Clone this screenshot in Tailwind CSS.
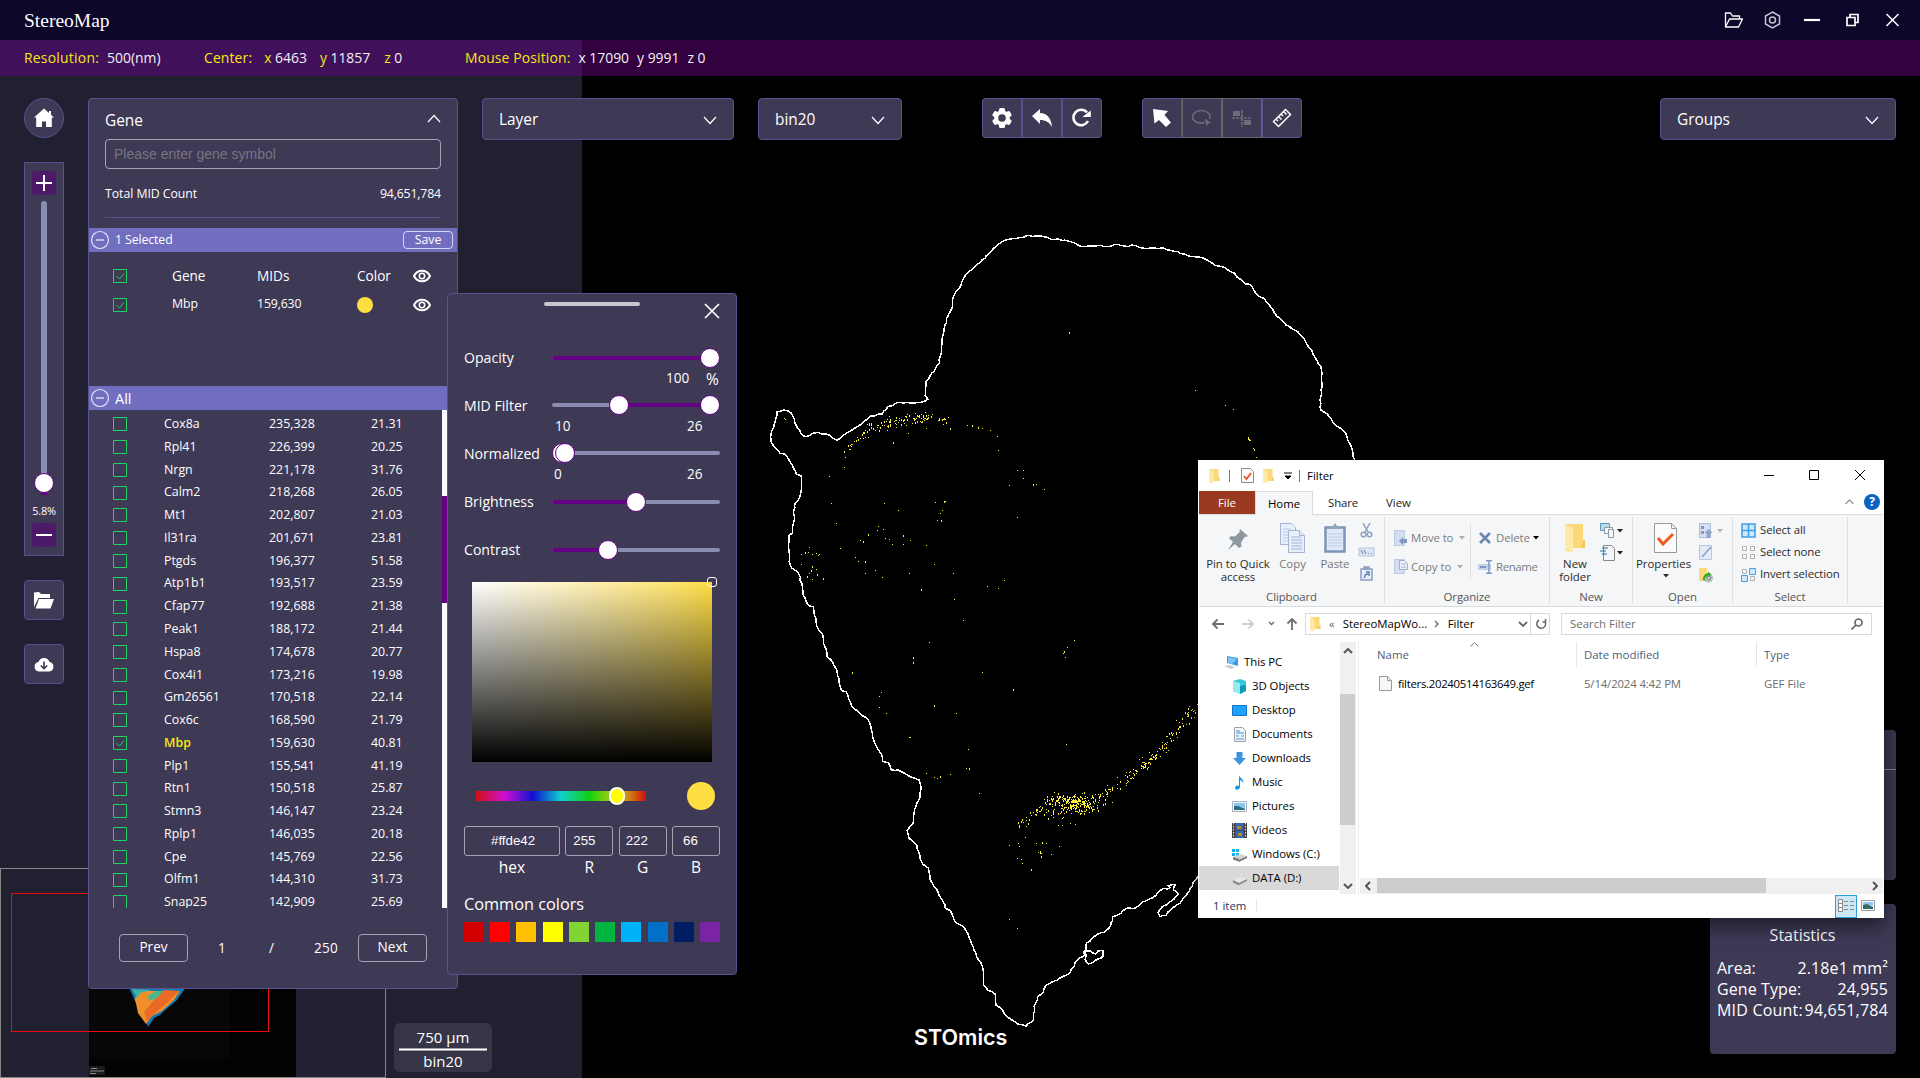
<!DOCTYPE html>
<html lang="en">
<head>
<meta charset="utf-8">
<title>StereoMap</title>
<script src="https://cdn.jsdelivr.net/npm/@tailwindcss/browser@4"></script>
</head>
<body class="relative w-[1920px] h-[1078px] overflow-hidden bg-black text-white font-['Open_Sans',sans-serif] text-[15px] whitespace-nowrap">

<svg class="hidden">
  <symbol id="folder" viewBox="0 0 10 14"><path d="M0 0h9v12H4L2 14 0 13z" fill="#fbd878"/><path d="M0 0l4 2v12L0 12.500z" fill="#ffe9a6"/><path d="M9 8h1v4H8z" fill="#f4c95c"/></symbol>
  <symbol id="caret" viewBox="0 0 6 4"><path d="M0 0h6L3 3.500z" fill="currentColor"/></symbol>
  <symbol id="eye" viewBox="0 0 18 14"><path d="M1 7C4.500 0 13.500 0 17 7 13.500 14 4.500 14 1 7z" fill="none" stroke="#fff" stroke-width="2"/><circle cx="9" cy="7" r="2.700" fill="none" stroke="#fff" stroke-width="1.500"/></symbol>
  <symbol id="minus" viewBox="0 0 20 20"><circle cx="10" cy="10" r="8.500" fill="none" stroke="#e4e4f6" stroke-width="1.200"/><path d="M6 10h8" stroke="#c9c8ea" stroke-width="1.800"/></symbol>
  <symbol id="down" viewBox="0 0 14 9"><path d="M1 1l6 6.500L13 1" fill="none" stroke="#fff" stroke-width="1.200"/></symbol>
</svg>

<!-- canvas -->
<div class="absolute left-0 top-0 w-[582px] h-full bg-[#202030]"></div>
<svg class="absolute left-0 top-0" width="1920" height="1078" shape-rendering="crispEdges">
  <g id="tissue" fill="none" stroke="#fff" stroke-width="1.500"></g>
  <g id="spots" fill="#ffee3c"></g>
</svg>

<!-- mini map -->
<div class="absolute left-0 top-[868px] w-[386px] h-[210px] border border-[#858585]">
  <svg width="384" height="208">
    <rect x="88" y="0" width="207" height="208" fill="#020202"/>
    <rect x="88" y="100" width="141" height="90" fill="#070707"/>
    <path d="M128 118h57l-4 6-6 8-12 10-4 4-6 3-6 9-1-3-3-5-8-16z" fill="#1378b4"/>
    <path d="M137 122h42l-6 9-12 11-10 5-6 8-8-11-3-14z" fill="#f0902c"/>
    <path d="M162 121l16 1-12 12-12 10-8 8-3-9z" fill="#e96a26"/>
    <path d="M147 127l8-5 7 0-6 7-8 3z" fill="#47b98e"/>
    <path d="M131 120l20 1-12 3-3 5z" fill="#38b3a4"/>
    <rect x="88" y="197" width="16" height="9" fill="#1b1b1b"/><path d="M90 199.500h6M89 202h14M89 204.500h6" stroke="#888"/>
    <rect x="10.500" y="24.500" width="257" height="138" fill="none" stroke="#f0080c"/>
  </svg>
</div>

<!-- title bar -->
<header class="relative h-10 flex items-center justify-between bg-[#0d072a] pl-6 pr-[18px]">
  <div class="font-['Liberation_Serif',serif] text-[19.500px] pt-0.5">StereoMap</div>
  <svg width="180" height="24" viewBox="0 0 180 24" fill="none" stroke="#fff" stroke-width="1.500">
    <path d="M3.500 19V5h5l2 3h7v3M3.500 19l4-8h13l-4 8z" stroke-linejoin="round" stroke-width="1.300"/>
    <path d="M50.500 4l7 4v8l-7 4-7-4V8z" stroke="#c6c3cf" stroke-width="1.500"/><circle cx="50.500" cy="12" r="3" stroke="#c6c3cf"/>
    <path d="M82 12h16" stroke-width="2.200"/>
    <path d="M125 9.500h8v8h-8z M128 9V6.500h8v8H133.500" stroke-width="1.700"/>
    <path d="M164.500 6l12 12M176.500 6l-12 12"/>
  </svg>
</header>
<div class="relative h-9 flex items-center bg-[#330040] text-[13.900px] text-[#f3f0f5] font-medium [&_b]:font-medium [&_b]:text-[#f5e616]">
  <div class="absolute inset-y-0 left-0 w-[582px] bg-[#40115a]"></div>
  <div class="relative flex items-center pl-6 h-9">
    <div class="w-[180px]"><b class="tracking-[0.250px]">Resolution:</b><span class="ml-2">500(nm)</span></div>
    <div class="w-[261px]"><b class="tracking-[0.150px]">Center:</b><b class="ml-3">x</b> 6463<b class="ml-[13px]">y</b> 11857<b class="ml-[14px]">z</b> 0</div>
    <div><b class="tracking-[0.150px]">Mouse Position:</b><span class="ml-2">x 17090</span><span class="ml-2">y 9991</span><span class="ml-2">z 0</span></div>
  </div>
</div>

<!-- left tools -->
<div class="absolute left-6 top-[98px] w-10 flex flex-col">
  <div class="size-10 rounded-full bg-[#3e3955] border border-[#56528f] flex items-center justify-center">
    <svg width="20" height="20" viewBox="0 0 20 20" fill="#fff"><path d="M10 .5L0 9.500h2.200V19H8v-5.500h4V19h5.800V9.500H20l-3-2.700V3h-2v2z"/></svg>
  </div>
  <div class="mt-6 h-[394px] bg-[#3e3955] border border-[#56528f] flex flex-col items-center pt-2">
    <div class="size-6 rounded bg-[#4d1a6a] flex items-center justify-center"><svg width="16" height="16"><path d="M8 0v16M0 8h16" stroke="#fff" stroke-width="2"/></svg></div>
    <div class="relative mt-1.5 w-1.5 h-[294px] shrink-0 rounded-t bg-[#8a8cb0]">
      <div class="absolute bottom-0 left-0 w-1.5 h-3 bg-[#640082]"></div>
      <div class="absolute left-[-7px] top-[272px] size-5 rounded-full bg-white border border-[#640082]"></div>
    </div>
    <div class="h-7 leading-8 text-[11px] tracking-[-0.300px]">5.8%</div>
    <div class="size-6 rounded bg-[#4d1a6a] flex items-center justify-center"><div class="w-4 h-0.5 bg-white"></div></div>
  </div>
  <div class="mt-6 size-10 rounded-sm bg-[#3e3955] border border-[#56528f] flex items-center justify-center">
    <svg width="20" height="18" viewBox="0 0 20 18" fill="#fff"><path d="M0 16V1.500L5 1l2 2h9v4H4.500z"/><path d="M5 8h15l-3.500 9.500H1.500z"/></svg>
  </div>
  <div class="mt-6 size-10 rounded-sm bg-[#3e3955] border border-[#56528f] flex items-center justify-center">
    <svg width="20" height="16" viewBox="0 0 20 16"><path d="M5 15.500a4.800 4.800 0 0 1-.5-9.500 5.800 5.800 0 0 1 11 0 4.800 4.800 0 0 1-.5 9.500z" fill="#fff"/><path d="M10 5.500v7M6.800 9.500L10 12.700l3.200-3.200" fill="none" stroke="#3e3955" stroke-width="1.600"/></svg>
  </div>
</div>

<!-- gene panel -->
<section class="absolute left-[88px] top-[98px] w-[370px] h-[891px] rounded bg-[#3e3955] border border-[#56528f] text-[12.300px] font-medium">
  <div class="px-4">
    <div class="h-10 flex items-center justify-between text-[15.400px] font-normal pt-1"><span>Gene</span><svg class="rotate-180 -mt-1.5" width="14" height="9"><use href="#down"/></svg></div>
    <div class="h-[30px] border border-[#a5a3b2] rounded-sm flex items-center pl-2 font-['Liberation_Sans',sans-serif] font-normal text-[14px] tracking-[0] text-[#777680]">Please enter gene symbol</div>
    <div class="h-[49px] flex items-center justify-between border-b border-[#56528f] pt-0.5"><span class="tracking-[-0.050px]">Total MID Count</span><span class="tracking-[-0.150px]">94,651,784</span></div>
  </div>
  <div class="mt-2.5 h-6 bg-[#716ec0] flex items-center pl-px pr-1">
    <svg width="20" height="20"><use href="#minus"/></svg><span class="ml-[5px] pt-px tracking-[-0.100px]">1 Selected</span>
    <div class="ml-auto w-[50px] h-[18px] border border-[#d6d5ee] rounded-sm flex items-center justify-center">Save</div>
  </div>
  <div class="h-[134px] pt-2.5">
    <div class="h-7 grid grid-cols-[83px_85px_100px_56px_20px] items-center text-[13.600px] font-normal"><span class="pl-6" data-box="1"></span><span>Gene</span><span>MIDs</span><span>Color</span><svg width="18" height="14"><use href="#eye"/></svg></div>
    <div class="h-7 grid grid-cols-[83px_85px_100px_56px_20px] items-center pt-px"><span class="pl-6" data-box="1"></span><span>Mbp</span><span class="tracking-[-0.150px]">159,630</span><span class="size-4 rounded-full bg-[#ffde42]"></span><svg width="18" height="14"><use href="#eye"/></svg></div>
  </div>
  <div class="h-6 bg-[#716ec0] flex items-center pl-px text-[14.500px]"><svg width="20" height="20"><use href="#minus"/></svg><span class="ml-[5px] pt-px">All</span></div>
  <div class="flex h-[498px] overflow-hidden">
    <div id="genes" class="w-[353px] pt-[3px] shrink-0"></div>
    <div class="w-[5px] bg-[#f9f8ff] pt-[86px]"><div class="h-[107px] bg-[#640082]"></div></div>
  </div>
  <div class="mt-[26px] h-7 flex items-center text-[13.600px] pl-[30px]">
    <div class="w-[69px] h-7 border border-[#a5a3b2] rounded flex items-center justify-center pb-0.5">Prev</div>
    <span class="ml-[30px] w-[51px]">1</span><span class="w-[45px]">/</span><span class="w-[44px] tracking-[0.200px]">250</span>
    <div class="w-[69px] h-7 border border-[#a5a3b2] rounded flex items-center justify-center pb-0.5">Next</div>
  </div>
</section>

<!-- colour panel -->
<section class="absolute left-[447px] top-[293px] w-[290px] h-[682px] rounded bg-[#3e3955] border border-[#56528f] px-4 text-[14.100px]">
  <div class="relative h-[54px]">
    <div class="absolute left-20 top-2 w-24 h-1 rounded bg-[#c9c8cf]"></div>
    <svg class="absolute right-0 top-[9px]" width="16" height="16"><path d="M1 1l14 14M15 1L1 15" stroke="#fff" stroke-width="1.700"/></svg>
  </div>
  <div id="sliders"></div>
  <div class="ml-2 mt-[-6px] w-60 h-[180px] relative bg-linear-to-r from-white to-[#ffde42]"><div class="absolute inset-0 bg-linear-to-b from-transparent to-black"></div><div class="absolute -top-[5px] -right-[5px] size-2.5 border border-white rounded-[3px]"></div></div>
  <div class="mt-5 h-7 flex items-center justify-between pl-3 pr-[5px]">
    <div class="relative w-[170px] h-2.5 bg-[linear-gradient(to_right,#d01010,#d010d0,#1010d0,#10d0d0,#10d010,#d0d010,#d01010)]"><div class="absolute left-[133px] -top-1 w-4 h-[18px] rounded-full border-2 border-white bg-[#ffff00] shadow"></div></div>
    <div class="size-7 rounded-full bg-[#ffde42]"></div>
  </div>
  <div class="mt-4 grid grid-cols-[96px_48px_48px_48px] justify-between text-center text-[15.500px] [&_div]:h-[30px] [&_div]:border [&_div]:border-[#a5a3b2] [&_div]:rounded-[3px] [&_div]:flex [&_div]:items-center [&_div]:font-['Liberation_Sans',sans-serif] [&_div]:text-[13.300px]">
    <div class="pl-[26px]">#ffde42</div><div class="pl-[7px]">255</div><div class="pl-[6px]">222</div><div class="pl-[10px]">66</div>
    <span>hex</span><span>R</span><span>G</span><span>B</span>
  </div>
  <div class="mt-3 h-[26px] leading-[26px] text-[16.300px]">Common colors</div>
  <div id="swatches" class="mt-[5px] flex justify-between"></div>
</section>

<!-- top controls -->
<div class="absolute left-[482px] top-[98px] w-[252px] h-[42px] bg-[#3e3955] border border-[#56528f] rounded flex items-center justify-between px-4 pt-0.5 text-[15.400px]"><span>Layer</span><svg width="14" height="9"><use href="#down"/></svg></div>
<div class="absolute left-[758px] top-[98px] w-[144px] h-[42px] bg-[#3e3955] border border-[#56528f] rounded flex items-center justify-between px-4 pt-0.5 text-[15.400px]"><span>bin20</span><svg width="14" height="9"><use href="#down"/></svg></div>
<div class="absolute left-[1660px] top-[98px] w-[236px] h-[42px] bg-[#3e3955] border border-[#56528f] rounded flex items-center justify-between px-4 pt-0.5 text-[15.400px]"><span>Groups</span><svg width="14" height="9"><use href="#down"/></svg></div>

<div class="absolute left-[982px] top-[98px] flex bg-[#3e3955] rounded [&>div]:size-10 [&>div]:border [&>div]:border-[#56528f] [&>div]:flex [&>div]:items-center [&>div]:justify-center">
  <div class="rounded-l"><svg width="22" height="22" viewBox="-11 -11 22 22"><g fill="#fff"><circle r="7.800"/><g id="tooth"><rect x="-3" y="-10" width="6" height="20" rx="1.500"/></g><use href="#tooth" transform="rotate(60)"/><use href="#tooth" transform="rotate(120)"/></g><circle r="3.800" fill="#3e3955"/></svg></div>
  <div><svg width="20" height="20" viewBox="0 0 20 20"><path d="M0 8L8 1v4c7 0 11 5 12 14-3-5-6-7-12-7v4z" fill="#fff"/></svg></div>
  <div class="rounded-r"><svg class="-ml-0.5" width="20" height="20" viewBox="0 0 20 20"><path d="M16 4.500A7.700 7.700 0 1 0 17 13" fill="none" stroke="#fff" stroke-width="2.600"/><path d="M19.800 2.500V9h-8.500z" fill="#fff"/></svg></div>
</div>
<div class="absolute left-[1142px] top-[98px] flex bg-[#3e3955] rounded [&>div]:size-10 [&>div]:border [&>div]:flex [&>div]:items-center [&>div]:justify-center">
  <div class="rounded-l border-[#56528f]"><svg width="20" height="20" viewBox="0 0 20 20"><path d="M1 1l15 2-3.500 4L19 14.500 14 19 7 12l-4.500 3.500z" fill="#fff"/></svg></div>
  <div class="border-[#66646a]"><svg width="22" height="18" viewBox="0 0 22 18"><path d="M14 13.500a8.800 6.300 0 1 1 4.500-3.500" fill="none" stroke="#6e6c76" stroke-width="1.600"/><path d="M14 9.500l6 4.500-3 .5-1.500 3z" fill="#6e6c76"/></svg></div>
  <div class="border-[#66646a]"><svg width="20" height="18" viewBox="0 0 20 18"><path d="M1 2h7v5H1zM12 11h7v5h-7z" fill="#6e6c76"/><path d="M10 1v17M0 9h20" stroke="#6e6c76" stroke-width="1.700" stroke-dasharray="3 1"/></svg></div>
  <div class="rounded-r border-[#56528f]"><svg width="20" height="20" viewBox="0 0 20 20"><path d="M1.500 13.500L13.500 1.500l5 5-12 12zM4 11l2 2M6.500 8.500l3 3M9 6l2 2M11.500 3.500l3 3" fill="none" stroke="#fff" stroke-width="1.500"/></svg></div>
</div>

<!-- scale bar and brand -->
<div class="absolute left-[394px] top-[1023px] w-[98px] h-[49px] rounded-md bg-[#353547] px-[5px] text-center text-[15px]">
  <div class="h-[25px] leading-[28px]">750 μm</div><div class="h-[3px] bg-white border-y border-[#a0a0a8]"></div><div class="h-5 leading-[21px]">bin20</div>
</div>
<div class="absolute left-[914px] top-[1021px] h-8 leading-8 font-[Inter,sans-serif] font-semibold text-[21.500px]">STOmics</div>

<!-- right panels -->
<div class="absolute left-[1710px] top-[730px] w-[186px] h-[150px] rounded bg-[#3a364e]"><div class="h-10 border-b border-[#82808c]"></div></div>
<div class="absolute left-[1710px] top-[904px] w-[186px] h-[150px] rounded bg-[#3e3955] pl-[7px] pr-2 pt-[20px] text-[16px]">
  <div class="text-center h-[34px] leading-[22px] text-[16px]">Statistics</div>
  <div class="flex justify-between leading-[21px]"><span>Area:</span><span class="tracking-[0.150px]">2.18e1 mm²</span></div>
  <div class="flex justify-between leading-[21px]"><span class="tracking-[0.100px]">Gene Type:</span><span class="tracking-[0.100px]">24,955</span></div>
  <div class="flex justify-between leading-[21px]"><span class="tracking-[0.200px]">MID Count:</span><span class="tracking-[0.200px]">94,651,784</span></div>
</div>

<!-- file explorer -->
<section class="absolute left-[1198px] top-[460px] w-[686px] h-[458px] bg-white text-black text-[11.400px] shadow-[0_8px_18px_rgba(0,0,0,0.5)] pl-px">
  <div class="h-[31px] flex items-center pl-2.5">
    <svg width="11" height="14"><use href="#folder"/></svg><i class="ml-[9px] w-px h-3 bg-[#777]"></i>
    <svg class="ml-[11px]" width="13" height="15"><path d="M.5.5h9l3 3v11H.5z" fill="#fafafa" stroke="#8d8d8d"/><path d="M3 8l2.500 3L10 5" fill="none" stroke="#e8541c" stroke-width="1.800"/></svg>
    <svg class="ml-[9px]" width="11" height="14"><use href="#folder"/></svg>
    <svg class="ml-2.5" width="8" height="8"><path d="M0 1h8M1 4h6L4 7z" fill="#000" stroke="#000"/></svg><i class="ml-[7px] w-px h-3 bg-[#777]"></i><span class="ml-[7px]">Filter</span>
    <svg class="ml-auto mr-[17px] -mt-px" width="103" height="12" fill="none" stroke="#000"><path d="M0 6.500h10M45.500 1.500h9v9h-9zM91 1l10 10M101 1L91 11"/></svg>
  </div>
  <div class="h-[23px] flex items-center relative">
    <div class="w-14 h-full bg-[#9a3a20] text-white flex items-center justify-center">File</div>
    <div class="w-[58px] h-6 mt-px bg-[#f5f6f7] border border-b-0 border-[#dadbdc] flex items-center justify-center relative z-10">Home</div>
    <span class="ml-[15px] w-[58px] text-[#222] tracking-[-0.100px]">Share</span><span class="text-[#222]">View</span>
    <svg class="ml-auto mr-2.5 -mt-0.5" width="9" height="6"><path d="M.5 5L4.500 1l4 4" fill="none" stroke="#999" stroke-width="1.300"/></svg>
    <div class="size-4 mr-1 -mt-px rounded-full bg-[#0a63c0] text-white font-bold text-[12px] leading-4 text-center">?</div>
  </div>
  <div class="h-[93px] bg-[#f5f6f7] border-y border-[#dadbdc] flex text-[#2b2b2b] mr-px [&_small]:text-[11.400px] [&_small]:text-[#555] [&_small]:block [&_small]:text-center [&_small]:-mt-0.5 [&_small]:tracking-[-0.100px]">
    <div class="w-[186px] mt-0.5 h-[87px] border-r border-[#dfe0e1]">
      <div class="h-[73px] flex pt-1.5 text-center leading-[13px]">
        <div class="w-[78px] flex flex-col items-center">
          <svg width="22" height="30" viewBox="0 0 22 30"><path d="M13 6l8 7-2 1-1-.5-4 6 .5 4L12 25l-4-4-7 6 5-8-4-4 2-2 4 .5 5-5-.5-1.500z" fill="#8d979e"/></svg>
          <span class="mt-1">Pin to Quick<br>access</span></div>
        <div class="w-[31px] flex flex-col items-center text-[#777]">
          <svg width="25" height="30" fill="#e8effb" stroke="#a4b5d3"><path d="M.5.5h11l4 4v17H.5z"/><path d="M3 6h8M3 9h8M3 12h5M3 15h5M3 18h5" stroke="#bccae4"/><path d="M8.500 7.500h11l5 5v17h-16z"/><path d="M11 14h10M11 17h11M11 20h11M11 23h11M11 26h11M19.500 7.500v5h5" stroke="#9eb2d8"/></svg>
          <span class="mt-1">Copy</span></div>
        <div class="w-[54px] flex flex-col items-center text-[#777]">
          <svg width="22" height="30"><path d="M1.500 4.500h19v24h-19z" fill="#dfe9f8" stroke="#7e93b8" stroke-width="2.500"/><path d="M6 3h3l2-3 2 3h3v3H6z" fill="#93a4bd"/><path d="M4 11h14M4 14h14M4 17h14M4 20h14M4 23h14" stroke="#c0cfe8"/></svg>
          <span class="mt-1">Paste</span></div>
        <svg class="-ml-1" width="17" height="60" fill="none" stroke="#8da0bf" stroke-width="1.500"><path d="M5 0l5 9M12 0L7 9"/><circle cx="5.500" cy="11.500" r="2.300"/><circle cx="11.500" cy="11.500" r="2.300"/><path d="M1 25h15v8H1z" stroke="#b5c3dc" fill="#dce6f6" stroke-width="1"/><path d="M3 27l2 4M6 27l2 4M10 30.500h1M13 30.500h1"/><path d="M3 46h11v11H3z" fill="#e8effa"/><path d="M6 44h5v2H6z" fill="#8da0bf"/><path d="M6.500 55c0-3 1-4 3.500-4M8 49h3v4" stroke="#5a7db5"/></svg>
      </div>
      <small>Clipboard</small>
    </div>
    <div class="w-[165px] mt-0.5 h-[87px] border-r border-[#dfe0e1] text-[#7a7c80]">
      <div class="h-[73px] flex pt-[6px]">
        <div class="w-[86px] h-[55px] border-r border-[#dfe0e1] pl-[9px]">
          <div class="h-[29px] flex items-center"><svg width="14" height="16"><path d="M.5.5h10v15H.5z" fill="#d3def0" stroke="#bccae2"/><path d="M5 11l4-4v2h4v4H9v2z" fill="#8399be"/></svg><span class="ml-[3px] w-[48px] tracking-[-0.100px]">Move to</span><svg class="text-[#aaa]" width="6" height="4"><use href="#caret"/></svg></div>
          <div class="h-[29px] flex items-center"><svg width="14" height="16"><path d="M.5.5h10v14H.5z" fill="#d3def0" stroke="#bccae2"/><path d="M5.500 1.500h5l3 3v6h-8zM7 5h5M7 8h5" fill="#eef3fb" stroke="#9db0d0"/></svg><span class="ml-[3px] w-[46px] tracking-[-0.050px]">Copy to</span><svg class="text-[#aaa]" width="6" height="4"><use href="#caret"/></svg></div>
        </div>
        <div class="pl-[7px]">
          <div class="h-[29px] flex items-center"><svg width="14" height="14"><path d="M2 2l10 10M12 2L2 12" stroke="#6f87ae" stroke-width="2.600"/></svg><span class="ml-1 w-[37px] tracking-[-0.100px]">Delete</span><svg class="text-black" width="6" height="4"><use href="#caret"/></svg></div>
          <div class="h-[29px] flex items-center"><svg width="15" height="14"><path d="M0 4h13v6H0z" fill="#c5d2e8"/><path d="M2 6h6v2H2z" fill="#7e97c2"/><path d="M8 .7h6M8 13.300h6M11 1v12" stroke="#7e97c2" stroke-width="1.500"/></svg><span class="ml-[3px] tracking-[-0.350px]">Rename</span></div>
        </div>
      </div>
      <small>Organize</small>
    </div>
    <div class="w-[83px] mt-0.5 h-[87px] border-r border-[#dfe0e1]">
      <div class="h-[73px] flex pt-1.5">
        <div class="w-[50px] flex flex-col items-center text-center leading-[13px]"><svg width="20" height="30" viewBox="0 0 10 15" preserveAspectRatio="none"><use href="#folder" width="10" height="14" y=".5"/></svg><span class="mt-1">New<br>folder</span></div>
        <svg width="24" height="40" fill="#f4f7fb" stroke="#8c9aa8"><path d="M.5.5h9v7h-9z" stroke="#5b9bb5" fill="#b9dbe8"/><path d="M4.500 4.500h8v6h-8z"/><path d="M8.500 6.500h5v8h-5z"/><path d="M3.500 22.500h8l3 3v12h-11z" stroke="#888"/><path d="M2 25h6M0 28h6M2 31h5" stroke="#1d6da8"/><path d="M17 6h6l-3 3.500zM17 28h6l-3 3.500z" fill="#222" stroke="none"/></svg>
      </div>
      <small>New</small>
    </div>
    <div class="w-[100px] mt-0.5 h-[87px] border-r border-[#dfe0e1]">
      <div class="h-[73px] flex pt-1.5">
        <div class="w-[65px] flex flex-col items-center text-center leading-[13px]"><svg width="23" height="30"><path d="M.5.5h17l5 5v24H.5zM17.500.5v5h5" fill="#fbfbfb" stroke="#9a9a9a"/><path d="M4 15l5 6 10-10" fill="none" stroke="#f05a1e" stroke-width="3"/></svg><span class="mt-1 -ml-1">Properties</span><svg class="mt-1" width="6" height="4"><use href="#caret"/></svg></div>
        <svg width="26" height="60"><path d="M1.500.5h11v14h-11z" fill="#d5e0f2" stroke="#aebdd8"/><path d="M3 3h3v3H3zM3 8h3v3H3z" fill="#8198c0"/><path d="M10.500 6l4 4h-2v5h-4v-5h-2z" fill="#8da3ca"/><path d="M19 6h6l-3 3.500z" fill="#b0b0b0"/><path d="M1.500 22.500h12v14h-12z" fill="#e3ebf8" stroke="#b7c6df"/><path d="M4 34l9-10" stroke="#8fa5cb" stroke-width="1.800"/><path d="M1 45h8v13H1z" fill="#fbd878"/><circle cx="10.500" cy="55" r="4.500" fill="#b5bcb9"/><path d="M5 57a6 6 0 0 1 5-7v-1.500l3.500 3-3.500 3v-1.500a4 4 0 0 0-3 5z" fill="#36b02c"/><circle cx="11" cy="55" r="1.500" fill="#fff" stroke="#777"/></svg>
      </div>
      <small>Open</small>
    </div>
    <div class="w-[115px] mt-0.5 h-[87px] border-r border-[#dfe0e1]">
      <div class="h-[73px] flex pt-1.5 pl-2">
        <svg width="15" height="60"><g fill="#cce8fb" stroke="#41a0e8"><path d="M1 1h13v13H1zM1 7.500h13M7.500 1v13" stroke-width="1.600"/><path d="M8.500 45.500h6v6h-6zM.5 52.500h6v6h-6z"/></g><g fill="#fafafa" stroke="#b0b0b0"><path d="M1.500 23.500h4v4h-4zM9.500 23.500h4v4h-4zM1.500 31.500h4v4h-4zM9.500 31.500h4v4h-4zM1.500 46.500h4v4h-4zM9.500 53.500h4v4h-4z"/></g></svg>
        <div class="ml-1 leading-[22px] -mt-1 tracking-[-0.100px]">Select all<br>Select none<br>Invert selection</div>
      </div>
      <small>Select</small>
    </div>
  </div>
  <div class="h-[35px] flex items-center pb-[1px] pl-3">
    <svg width="88" height="14" fill="none" stroke="#6d6d6d" stroke-width="1.800"><path d="M13 7H2M6.500 2.500L2 7l4.500 4.500"/><path d="M31 7h11M37.500 2.500L42 7l-4.500 4.500" stroke="#d0d0d0"/><path d="M58 5l2.500 2.500L63 5" stroke-width="1.500"/><path d="M81 13V2M76.500 6.500L81 2 85.500 6.500"/></svg>
    <div class="ml-1.5 w-[245px] h-[22px] border border-[#d9d9d9] flex items-center pl-1"><svg width="11" height="14"><use href="#folder"/></svg><span class="ml-2 text-[#666]">«</span><span class="ml-2 w-[88px]">StereoMapWo...</span><svg class="ml-[3px]" width="5" height="8"><path d="M1 1l3 3-3 3" fill="none" stroke="#666" stroke-width="1.300"/></svg><span class="ml-[9px]">Filter</span><svg class="ml-auto" width="10" height="7"><path d="M1 1l4 4 4-4" fill="none" stroke="#666" stroke-width="1.800"/></svg><i class="ml-0.5 w-px h-5 bg-[#d9d9d9]"></i><svg class="ml-1 mr-0.5" width="12" height="12"><path d="M10 3.500A4.400 4.400 0 1 1 4 2M7.500 4h3V1" fill="none" stroke="#666" stroke-width="1.500"/></svg></div>
    <div class="ml-[11px] w-[311px] h-[22px] border border-[#d9d9d9] flex items-center justify-between px-2 text-[#6d6d6d]">Search Filter<svg width="12" height="12" fill="none" stroke="#666" stroke-width="1.700"><circle cx="7.500" cy="4.500" r="3.500"/><path d="M5 7l-4.500 4.500"/></svg></div>
  </div>
  <div class="flex h-[252px]">
    <div id="nav" class="w-[140px] pt-2"></div>
    <div class="ml-px w-4 bg-[#f0f0f0] flex flex-col items-center"><svg class="mt-[6px]" width="10" height="6"><path d="M1 5l4-4 4 4" fill="none" stroke="#555" stroke-width="2"/></svg><div class="mt-[40px] w-[15px] h-[131px] self-start bg-[#cdcdcd]"></div><svg class="mt-auto mb-[5px]" width="10" height="6"><path d="M1 1l4 4 4-4" fill="none" stroke="#555" stroke-width="2"/></svg></div>
    <div class="ml-0.5 w-px bg-[#eee]"></div>
    <div class="flex-1 flex flex-col ml-px mr-px">
      <div class="relative grid grid-cols-[217px_180px_1fr] h-[25px] leading-[25px] text-[#4c607a]">
        <span class="pl-[17px] border-r border-[#e5e5e5]">Name</span><span class="pl-[7px] border-r border-[#e5e5e5]">Date modified</span><span class="pl-[7px]">Type</span>
        <svg class="absolute left-[110px] top-0" width="9" height="5"><path d="M.5 4.500L4.500.5l4 4" fill="none" stroke="#777"/></svg>
      </div>
      <div class="grid grid-cols-[217px_180px_1fr] h-[34px] items-center text-[#6d6d6d]">
        <span class="pl-[19px] flex items-center text-black"><svg width="13" height="15"><path d="M.5.5h8l4 4v10H.5zM8.500.5v4h4" fill="#f7f7f7" stroke="#9a9a9a"/></svg><span class="ml-[6px] tracking-[-0.300px]">filters.20240514163649.gef</span></span><span class="pl-[7px] tracking-[-0.150px]">5/14/2024 4:42 PM</span><span class="pl-[7px]">GEF File</span>
      </div>
      <div class="mt-auto h-4 bg-[#f0f0f0] flex items-center pl-[5px]"><svg width="6" height="10"><path d="M5 1L1 5l4 4" fill="none" stroke="#555" stroke-width="2"/></svg><div class="ml-[6px] w-[389px] h-[15px] self-start bg-[#cdcdcd]"></div><svg class="ml-auto mr-[5px]" width="6" height="10"><path d="M1 1l4 4-4 4" fill="none" stroke="#555" stroke-width="2"/></svg></div>
    </div>
  </div>
  <div class="h-6 flex items-center pl-3.5 text-[#23346a]">1 item<i class="ml-2.5 w-px h-3 bg-[#e5e5e5]"></i>
    <div class="ml-auto w-[22px] h-[23px] border border-[#2a9fdc] bg-[#cce8f7] flex items-center justify-center"><svg width="17" height="14" fill="#fff" stroke="#888"><path d="M.5.5h4v4h-4zM.5 4.500h4v4h-4zM.5 8.500h4v4h-4zM6 2.500h4M12 2.500h4M6 6.500h4M12 6.500h4M6 10.500h4M12 10.500h4"/></svg></div>
    <svg class="ml-1 mr-[9px] -mt-0.5" width="14" height="11"><path d="M.5.5h13v10H.5z" fill="#fff" stroke="#999"/><path d="M2 2h10v3.500H2z" fill="#8cc4f4"/><path d="M2 5l4-1 6 3v2H2z" fill="#356a6a"/></svg>
  </div>
</section>

<script>
const tick = on => `<svg width="14" height="14"><path d="M.5.5h13v13H.5z" fill="none" stroke="#1fd15f"/>${on ? '<path d="M3.500 7l3 3L11 4.500" fill="none" stroke="#1fd15f"/>' : ''}</svg>`;
document.querySelectorAll('[data-box]').forEach(e => e.innerHTML = tick(true));

const genes = `Cox8a 235,328 21.31|Rpl41 226,399 20.25|Nrgn 221,178 31.76|Calm2 218,268 26.05|Mt1 202,807 21.03|Il31ra 201,671 23.81|Ptgds 196,377 51.58|Atp1b1 193,517 23.59|Cfap77 192,688 21.38|Peak1 188,172 21.44|Hspa8 174,678 20.77|Cox4i1 173,216 19.98|Gm26561 170,518 22.14|Cox6c 168,590 21.79|Mbp 159,630 40.81|Plp1 155,541 41.19|Rtn1 150,518 25.87|Stmn3 146,147 23.24|Rplp1 146,035 20.18|Cpe 145,769 22.56|Olfm1 144,310 31.73|Snap25 142,909 25.69`;
document.getElementById('genes').innerHTML = genes.split('|').map(g => {
  const [n, c, v] = g.split(' '), on = n === 'Mbp';
  return `<div class="h-[22.770px] grid grid-cols-[75px_105px_102px_60px] items-center text-[12.400px]"><span class="pl-6">${tick(on)}</span><span class="${on ? 'text-[#f5e616] font-semibold' : ''}">${n}</span><span>${c}</span><span>${v}</span></div>`;
}).join('');

// label, filled from, filled to, thumbs, values under the track
const sliders = [
  ['Opacity', 0, 158, [158], [[114, '100'], [154, '%']]],
  ['MID Filter', 67, 158, [67, 158], [[3, '10'], [135, '26']]],
  ['Normalized', 0, 10, [10, 13], [[2, '0'], [135, '26']]],
  ['Brightness', 0, 84, [84], []],
  ['Contrast', 0, 56, [56], []]];
document.getElementById('sliders').innerHTML = sliders.map(([n, a, b, th, vals], i) => `
  <div class="h-12"><div class="h-5 flex items-center"><span class="w-[88px]">${n}</span>
  <div class="relative w-[168px] h-1 rounded bg-[#8a8cb0] ${i === 1 || i === 2 ? '-mt-0.5' : ''}"><div class="absolute h-1 rounded bg-[#640082]" style="left:${a}px;width:${b - a}px"></div>
  ${th.map(t => `<div class="absolute -top-2 -ml-2.5 size-5 rounded-full bg-white border border-[#640082]" style="left:${t}px"></div>`).join('')}</div></div>
  <div class="relative ml-[88px] h-5 leading-5 text-[13.600px]">${vals.map(([x, t]) => `<span class="absolute ${t === '%' ? 'text-[15.500px] top-px' : ''}" style="left:${x}px">${t}</span>`).join('')}</div></div>`).join('');

document.getElementById('swatches').innerHTML = ['#d20000', '#ff0000', '#ffc000', '#ffff00', '#82d432', '#00b440', '#00b2f8', '#0070c8', '#001e64', '#7a24a4']
  .map(c => `<div class="size-5" style="background:${c}"></div>`).join('');

const nav = [
  ['This PC', '<path d="M3 1l11 2v8L3 8z" fill="#3a9be0"/><path d="M4 2l9 2-5 5-4-1z" fill="#7cc6f5"/><path d="M0 11l5-1 6 2-4 2z" fill="#c9cdd2"/>'],
  ['3D Objects', '<path d="M1 2l7-2 6 2v9l-6 4-7-3z" fill="#35c5dc"/><path d="M1 2l7 2v11l-7-3z" fill="#9be8ef"/><path d="M8 7l6-1v6l-6 3z" fill="#0a9cb8"/>'],
  ['Desktop', '<path d="M.5 2.500h14v10H.5z" fill="#1fa2ff" stroke="#1273c8"/>'],
  ['Documents', '<path d="M2.500.5h8l3 3v11h-11z" fill="#f4f6f8" stroke="#9aa0a6"/><path d="M4 4h4M4 6h8M4 9h3M4 12h8M9 9h3" stroke="#3f8fd0"/>'],
  ['Downloads', '<path d="M4.500 1h6v6H14l-6.500 7L1 7h3.500z" fill="#3c94df"/>'],
  ['Music', '<path d="M7 0c1 4 5 3 4 8-1-2-2-3-3-3v7c0 3-5 4-5 1 0-2 2-3 4-2z" fill="#1296f0"/>'],
  ['Pictures', '<path d="M.5 2.500h14v10H.5z" fill="#f4f4f4" stroke="#a9b3bb"/><path d="M2 4h11v7H2z" fill="#8ac6ee"/><path d="M2 7l4 0 7 3v1H2z" fill="#2f6c84"/>'],
  ['Videos', '<path d="M0 0h15v15H0z" fill="#444"/><path d="M3.500 0h8v7h-8zM3.500 8h8v7h-8z" fill="#3568b0"/><path d="M1.500 0v15M13.500 0v15" stroke="#ddd" stroke-dasharray="1.500 1.500"/><path d="M5 3h4v3H5zM6 10h4v3H6z" fill="#b8852e"/>'],
  ['Windows (C:)', '<path d="M0 2h3v3H0zM4 2h3v3H4zM0 6h3v3H0zM4 6h3v3H4z" fill="#16b0ea"/><path d="M1 10l7-3 7 2-8 4z" fill="#d4d4d4"/><path d="M1 10l6 2v2.500l-6-2zM7 13l8-4v2l-8 4z" fill="#777"/>'],
  ['DATA (D:)', '<path d="M1 9l7-3 7 2-8 4z" fill="#e6e6e6"/><path d="M1 9l6 3v2.500l-6-3zM7 12l8-4v2l-8 4z" fill="#8a8a8a"/>']];
document.getElementById('nav').innerHTML = nav.map(([t, s], i) =>
  `<div class="h-6 flex items-center ${i === 9 ? 'bg-[#d9d9d9]' : ''} ${i ? 'pl-[33px]' : 'pl-[25px]'}"><svg width="15" height="15">${s}</svg><span class="ml-[5px] tracking-[-0.050px]">${t}</span></div>`).join('');

// deterministic noise
let seed = 7;
const rnd = () => (seed = (seed * 16807) % 2147483647) / 2147483647;
const X = x => 740 + x / 2.3758, Y = y => 210 + y / 3;

// tissue boundary: control points, then a fine uneven edge
const upper = [1461,749,1455,720,1447,697,1438,668,1420,650,1408,635,1395,612,1380,600,1378,570,1383,520,1380,470,1365,440,1348,405,1342,390,1325,365,1297,345,1270,310,1245,265,1232,258,1214,226,1200,222,1175,190,1145,170,1130,167,1102,145,1075,140,1040,125,1005,113,990,115,955,114,940,107,915,108,897,103,880,109,850,107,812,110,790,97,755,86,738,88,722,80,685,76,672,83,640,87,620,97,598,122,575,150,543,185,525,225,506,262,505,285,497,310,487,345,480,400,474,460,455,490,442,515,440,558,447,568,430,577,380,577,350,590,338,612,310,618,290,640,260,665,230,690,205,672,180,668,165,677,150,678,135,650,122,610,105,600,88,605,82,640,74,670,75,700,95,730,110,737,127,775,134,793,145,797,145,845,140,867,129,885,127,940,124,970,117,975,117,1055,122,1073,137,1085,147,1120,150,1155,163,1187,174,1190,180,1225,187,1260,194,1268,200,1305,207,1340,220,1355,231,1385,235,1415];
const lower = [240,208,252,215,265,258,290,287,305,300,315,345,322,375,337,405,338,424,353,428,360,450,375,450,400,467,425,480,429,495,428,530,420,550,412,590,410,612,397,632,402,655,420,677,427,705,434,732,448,745,452,780,465,805,475,830,488,865,500,872,510,905,527,917,541,940,550,970,562,1010,573,1030,578,1055,579,1095,588,1110,606,1122,608,1155,620,1165,635,1190,660,1212,680,1218,697,1200,699,1160,707,1130,720,1118,728,1095,755,1080,785,1057,797,1025,815,1010,822,993,823,970,850,942,865,938,880,918,885,890,905,880,918,865,940,863,965,842,980,833,1000,810,1022,803,1018,797,1034,794,1030,810,1042,822,1020,847,1003,860,993,878,998,890,1012,887,1025,868,1045,850,1060,825,1070,805,1090,765];
const heart = [815,1000,820,992,832,993,845,1002,850,993,863,992,863,1008,848,1018,828,1032,820,1020,822,1003,815,1000];
const pairs = (a, dy) => a.reduce((r, v, i) => (i % 2 ? r[r.length - 1].push(Y(v + dy)) : r.push([X(v)]), r), []);
const line = pts => {
  let d = 'M' + pts[0];
  for (let i = 1; i < pts.length; i++) {
    const [x0, y0] = pts[i - 1], [x1, y1] = pts[i], n = Math.max(1, Math.round(Math.hypot(x1 - x0, y1 - y0) / 3.5));
    for (let k = 1; k <= n; k++) d += `L${(x0 + (x1 - x0) * k / n + (k < n ? rnd() * 1.6 - .8 : 0)).toFixed(1)} ${(y0 + (y1 - y0) * k / n + (k < n ? rnd() * 1.6 - .8 : 0)).toFixed(1)}`;
  }
  return `<path d="${d}"/>`;
};
document.getElementById('tissue').innerHTML = line([...pairs(upper, 0), ...pairs(lower, 1230)]) + line(pairs(heart, 1230));

// expression spots
const dots = [781,367,1082,540,1153,586,1172,598,1207,680,1210,686,1208,683,1212,690,1218,715,1220,717,1226,742,104,624,106,627,212,799,217,880,228,940,246,772,250,742,248,722,258,718,364,697,398,670,441,655,498,655,540,645,550,644,565,650,575,655,595,661,611,679,612,721,658,781,673,781,673,805,695,821,704,823,723,838,640,826,657,922,464,877,484,872,486,874,484,875,343,880,376,901,479,901,475,910,468,931,478,931,329,949,326,961,340,957,304,973,284,991,293,994,345,985,354,988,362,1003,388,976,388,979,405,991,388,1003,441,1006,237,1015,274,1040,281,1054,298,1054,296,1090,320,1079,321,1081,337,1100,338,1102,401,1090,462,1063,505,1090,429,1138,509,1168,530,1231,588,1129,612,1135,628,1111,793,1289,778,1310,770,1322,768,1328,771,1342,448,1297,410,1342,412,1357,265,1387,576,1387,648,1438,165,1010,155,1025,145,1033,162,1027,172,1033,180,1028,187,1031,186,1034,144,1063,170,1067,181,1078,168,1080,163,1090,184,1096,171,1107,198,1105,160,1098,182,1093,336,1447,330,1459,331,1490,348,1510,460,1486,512,1510,401,1580,403,1582,541,1618,538,1675,544,1675,441,1690,462,1702,467,1704,474,1698,498,1693,568,1750,775,1601,775,1603,638,2128,659,2155,692,1978,657,1945,668,1947,671,1960,640,1904,660,1900,662,1908,677,1880,704,1900,718,1897,728,1898,758,1908,740,1931,708,1925,712,1922,716,1930,714,1937,712,1928,756,1845,764,1846,785,1840,795,1841,884,1777,866,1780];
const gauss = () => (rnd() + rnd() + rnd() - 1.5) / 1.5;
const put = (x, y) => dots.push(x, y);
for (let i = 0; i < 85; i++) { const t = rnd(); put(298 + t * 140 + gauss() * 8, 655 - t * 38 + gauss() * 26); }
for (let i = 0; i < 22; i++) { const t = rnd(); put(420 + t * 82, 620 + t * 9 + gauss() * 18); }
for (let i = 0; i < 20; i++) { const t = rnd(); put(252 + t * 60, 712 - t * 50 + gauss() * 16); }
for (let i = 0; i < 235; i++) put(797 + gauss() * 78, 1777 + gauss() * 46);
for (let i = 0; i < 34; i++) { const t = rnd(); put(722 + t * 50, 1758 + rnd() * 70); }
for (let i = 0; i < 28; i++) { const t = rnd(); put(660 + t * 60, 1850 - t * 60 + gauss() * 26); }
const tail = [[840, 1770], [905, 1720], [960, 1660], [1005, 1612], [1040, 1550], [1088, 1480]];
for (let i = 0; i < 165; i++) {
  const s = rnd() * 5, k = Math.floor(s), f = s - k, a = tail[k], b = tail[k + 1];
  put(Math.min(1087, a[0] + (b[0] - a[0]) * f + gauss() * 17), a[1] + (b[1] - a[1]) * f + gauss() * 28);
}
let s = '';
for (let i = 0; i < dots.length; i += 2) s += `<rect x="${Math.round(X(dots[i]))}" y="${Math.round(Y(dots[i + 1]))}" width="1" height="${rnd() < .3 ? 2 : 1}"/>`;
document.getElementById('spots').innerHTML = s;
</script>
</body>
</html>
